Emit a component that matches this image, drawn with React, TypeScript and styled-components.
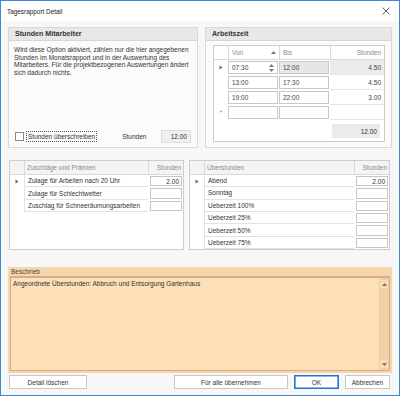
import React from "react";
import styled, { createGlobalStyle } from "styled-components";

const GlobalStyle = createGlobalStyle`
  html, body {
    margin: 0;
    padding: 0;
    background: #ffffff;
  }
  body {
    font-family: "Liberation Sans", Arial, sans-serif;
    font-size: 6.5px;
    color: #333333;
  }
  * {
    box-sizing: border-box;
  }
`;

// 창 전체
const Window = styled.div`
  width: 400px;
  height: 396px;
  border: 1px solid #3b87d8;
  background: #f7f7f7;
  display: flex;
  flex-direction: column;
`;

const TitleBar = styled.div`
  height: 20px;
  background: #ffffff;
  display: flex;
  align-items: center;
  justify-content: space-between;
  padding: 0 9px 0 6px;
  font-size: 6.4px;
  color: #222222;
`;

const Body = styled.div`
  flex: 1;
  display: flex;
  flex-direction: column;
  padding: 6px 7px 6px 7px;
`;

const TopRow = styled.div`
  display: flex;
  gap: 7px;
  height: 121px;
`;

const Group = styled.div<{ $width?: number }>`
  ${(p) => (p.$width ? `flex: 0 0 ${p.$width}px;` : "flex: 1;")}
  border: 1px solid #d9d9d9;
  background: #fbfbfb;
  display: flex;
  flex-direction: column;
`;

const GroupHeader = styled.div`
  height: 13px;
  background: #e8e8e8;
  border-bottom: 1px solid #d6d6d6;
  display: flex;
  align-items: center;
  padding-left: 6px;
  font-weight: bold;
  font-size: 7.1px;
  color: #333333;
`;

const GroupContent = styled.div<{ $pad: string }>`
  flex: 1;
  display: flex;
  flex-direction: column;
  padding: ${(p) => p.$pad};
`;

const Description = styled.div`
  line-height: 7.7px;
  color: #333333;
`;

const OverrideRow = styled.div`
  margin-top: auto;
  height: 13px;
  display: flex;
  align-items: center;
`;

const CheckBox = styled.span`
  width: 9px;
  height: 9px;
  border: 1px solid #8a8a8a;
  background: #ffffff;
  margin-left: 1px;
  flex-shrink: 0;
`;

const FocusLabel = styled.span`
  margin-left: 2px;
  border: 1px dotted #555555;
  padding: 1px 1px;
  line-height: 7px;
  white-space: nowrap;
`;

const FieldLabel = styled.span`
  margin-left: 25px;
`;

const ReadOnlyBox = styled.div<{ $width: number }>`
  width: ${(p) => p.$width}px;
  height: 13px;
  margin-left: auto;
  background: #efefef;
  border: 1px solid #dcdcdc;
  display: flex;
  align-items: center;
  justify-content: flex-end;
  padding-right: 3px;
`;

// 작업시간 그리드
const GridFrame = styled.div`
  flex: 1;
  border: 1px solid #cdcdcd;
  background: #ffffff;
  display: flex;
  flex-direction: column;
`;

const TimeHeader = styled.div`
  display: grid;
  grid-template-columns: 14px 51px 51px 1fr;
  height: 14px;
  border-bottom: 1px solid #d9d9d9;
`;

const HeaderCell = styled.div<{ $right?: boolean }>`
  display: flex;
  align-items: center;
  justify-content: ${(p) => (p.$right ? "flex-end" : "space-between")};
  padding: 0 3px;
  border-left: 1px solid #d9d9d9;
  color: #8a8a8a;
  &:first-child {
    border-left: none;
  }
`;

const TimeRow = styled.div`
  display: grid;
  grid-template-columns: 14px 51px 51px 1fr;
  height: 15px;
`;

const Indicator = styled.div`
  display: flex;
  align-items: center;
  justify-content: center;
`;

const NewRowMark = styled.span`
  color: #f08a24;
  font-size: 8px;
  line-height: 6px;
`;

const InputCell = styled.div<{ $selected?: boolean }>`
  margin: 1px 1px 1px 0;
  border: 1px solid #c8c8c8;
  background: ${(p) => (p.$selected ? "#e6e6e6" : "#ffffff")};
  display: flex;
  align-items: center;
  justify-content: space-between;
  padding: 0 3px;
  color: #444444;
`;

const HoursCell = styled.div<{ $selected?: boolean }>`
  display: flex;
  align-items: center;
  justify-content: flex-end;
  padding-right: 3px;
  background: ${(p) => (p.$selected ? "#ebebeb" : "transparent")};
  border-bottom: 1px solid #e6e6e6;
  color: #444444;
`;

const GridFooter = styled.div`
  margin-top: auto;
  display: flex;
  justify-content: flex-end;
  padding: 0 4px 3px 0;
`;

const TotalBox = styled.div`
  width: 48px;
  height: 14px;
  background: #ebebeb;
  display: flex;
  align-items: center;
  justify-content: flex-end;
  padding-right: 3px;
`;

// 할증 / 초과근무 그리드
const MiddleRow = styled.div`
  display: flex;
  gap: 5px;
  height: 90px;
  margin-top: 12px;
  padding: 0 2px 0 1px;
`;

const ListGrid = styled.div<{ $width?: number }>`
  ${(p) => (p.$width ? `flex: 0 0 ${p.$width}px;` : "flex: 1;")}
  border: 1px solid #cdcdcd;
  background: #ffffff;
  display: flex;
  flex-direction: column;
`;

const ListHeader = styled.div`
  display: grid;
  grid-template-columns: 14px 1fr 35px;
  height: 14px;
  background: #f4f4f4;
  border-bottom: 1px solid #d9d9d9;
  color: #8a8a8a;
`;

const ListHeaderCell = styled.div<{ $right?: boolean; $sep?: boolean }>`
  display: flex;
  align-items: center;
  justify-content: ${(p) => (p.$right ? "flex-end" : "flex-start")};
  padding: 0 2px;
  border-left: ${(p) => (p.$sep ? "1px solid #d9d9d9" : "none")};
`;

const ListRow = styled.div`
  display: grid;
  grid-template-columns: 14px 1fr 35px;
  height: 12.4px;
`;

const LabelCell = styled.div`
  display: flex;
  align-items: center;
  padding-left: 3px;
  border-left: 1px solid #e2e2e2;
  border-bottom: 1px solid #e2e2e2;
  color: #333333;
`;

const ValueCell = styled.div`
  margin: 1px 1px 1px 2px;
  border: 1px solid #c6c6c6;
  background: #ffffff;
  display: flex;
  align-items: center;
  justify-content: flex-end;
  padding-right: 2px;
`;

// 설명 영역
const NotePanel = styled.div`
  height: 106px;
  margin-top: 17px;
  background: #f8d6ab;
  display: flex;
  flex-direction: column;
  padding: 0 2px 2px 2px;
`;

const NoteLabel = styled.div`
  height: 9px;
  display: flex;
  align-items: center;
  padding-left: 1px;
  color: #444444;
`;

const NoteArea = styled.div`
  flex: 1;
  display: flex;
  background: #fddfb8;
  border: 1px solid #d4ae86;
  border-top-width: 2px;
`;

const NoteText = styled.div`
  flex: 1;
  padding: 2px 2px;
  color: #333333;
`;

const ScrollBar = styled.div`
  width: 10px;
  background: #f1d0a6;
  display: flex;
  flex-direction: column;
  justify-content: space-between;
  align-items: center;
  padding: 2px 0;
`;

const ScrollArrow = styled.div`
  width: 8px;
  height: 8px;
  background: #f8dcb6;
  display: flex;
  align-items: center;
  justify-content: center;
`;

// 버튼 영역
const ButtonRow = styled.div`
  display: flex;
  height: 14px;
  margin-top: 2px;
  padding: 0 2px 0 1px;
  gap: 6px;
`;

const Button = styled.div<{ $width: number; $primary?: boolean }>`
  width: ${(p) => p.$width}px;
  border: 1px solid ${(p) => (p.$primary ? "#2b72c8" : "#c8c8c8")};
  box-shadow: ${(p) => (p.$primary ? "inset 0 0 0 0.6px #2b72c8" : "none")};
  background: #ffffff;
  display: flex;
  align-items: center;
  justify-content: center;
  color: #333333;
`;

const Spacer = styled.div`
  flex: 1;
`;

const RowArrow = () => (
  <svg width="4" height="5" viewBox="0 0 4 5">
    <path d="M0.5 0.5 L3.5 2.5 L0.5 4.5 Z" fill="#666" />
  </svg>
);

const TinyTriangle = ({ down }: { down?: boolean }) => (
  <svg width="5" height="3" viewBox="0 0 5 3">
    <path d={down ? "M0 0 L5 0 L2.5 3 Z" : "M0 3 L5 3 L2.5 0 Z"} fill="#777" />
  </svg>
);

const Spinner = styled.span`
  display: flex;
  flex-direction: column;
  gap: 2px;
`;

const timeRows = [
  { von: "07:30", bis: "12:00", std: "4.50", selected: true },
  { von: "13:00", bis: "17:30", std: "4.50" },
  { von: "19:00", bis: "22:00", std: "3.00" },
];

const zuschlaege = [
  { label: "Zulage für Arbeiten nach 20 Uhr", value: "2.00" },
  { label: "Zulage für Schlechtwetter", value: "" },
  { label: "Zuschlag für Schneeräumungsarbeiten", value: "" },
];

const ueberstunden = [
  { label: "Abend", value: "2.00" },
  { label: "Sonntag", value: "" },
  { label: "Ueberzeit 100%", value: "" },
  { label: "Ueberzeit 25%", value: "" },
  { label: "Ueberzeit 50%", value: "" },
  { label: "Ueberzeit 75%", value: "" },
];

function App() {
  return (
    <Window>
      <GlobalStyle />
      <TitleBar>
        <span>Tagesrapport Detail</span>
        <svg width="8" height="8" viewBox="0 0 8 8">
          <path d="M0.5 0.5 L7.5 7.5 M7.5 0.5 L0.5 7.5" stroke="#333" strokeWidth="0.8" />
        </svg>
      </TitleBar>
      <Body>
        <TopRow>
          <Group $width={190}>
            <GroupHeader>Stunden Mitarbeiter</GroupHeader>
            <GroupContent $pad="5px 6px 4px 5px">
              <Description>
                Wird diese Option aktiviert, zählen nur die hier angegebenen
                Stunden im Monatsrapport und in der Auswertung des
                Mitarbeiters. Für die projektbezogenen Auswertungen ändert
                sich dadurch nichts.
              </Description>
              <OverrideRow>
                <CheckBox />
                <FocusLabel>Stunden überschreiben</FocusLabel>
                <FieldLabel>Stunden</FieldLabel>
                <ReadOnlyBox $width={30}>12.00</ReadOnlyBox>
              </OverrideRow>
            </GroupContent>
          </Group>
          <Group>
            <GroupHeader>Arbeitszeit</GroupHeader>
            <GroupContent $pad="4px 6px 5px 7px">
              <GridFrame>
                <TimeHeader>
                  <HeaderCell />
                  <HeaderCell>
                    Von
                    <TinyTriangle />
                  </HeaderCell>
                  <HeaderCell>Bis</HeaderCell>
                  <HeaderCell $right>Stunden</HeaderCell>
                </TimeHeader>
                {timeRows.map((r, i) => (
                  <TimeRow key={r.von}>
                    <Indicator>{i === 0 && <RowArrow />}</Indicator>
                    <InputCell>
                      {r.von}
                      {i === 0 && (
                        <Spinner>
                          <TinyTriangle />
                          <TinyTriangle down />
                        </Spinner>
                      )}
                    </InputCell>
                    <InputCell $selected={r.selected}>{r.bis}</InputCell>
                    <HoursCell $selected={r.selected}>{r.std}</HoursCell>
                  </TimeRow>
                ))}
                <TimeRow>
                  <Indicator>
                    <NewRowMark>*</NewRowMark>
                  </Indicator>
                  <InputCell />
                  <InputCell />
                  <HoursCell />
                </TimeRow>
                <GridFooter>
                  <TotalBox>12.00</TotalBox>
                </GridFooter>
              </GridFrame>
            </GroupContent>
          </Group>
        </TopRow>

        <MiddleRow>
          <ListGrid $width={175}>
            <ListHeader>
              <ListHeaderCell />
              <ListHeaderCell $sep>Zuschläge und Prämien</ListHeaderCell>
              <ListHeaderCell $right $sep>
                Stunden
              </ListHeaderCell>
            </ListHeader>
            {zuschlaege.map((r, i) => (
              <ListRow key={r.label}>
                <Indicator>{i === 0 && <RowArrow />}</Indicator>
                <LabelCell>{r.label}</LabelCell>
                <ValueCell>{r.value}</ValueCell>
              </ListRow>
            ))}
          </ListGrid>
          <ListGrid>
            <ListHeader>
              <ListHeaderCell />
              <ListHeaderCell $sep>Überstunden</ListHeaderCell>
              <ListHeaderCell $right $sep>
                Stunden
              </ListHeaderCell>
            </ListHeader>
            {ueberstunden.map((r, i) => (
              <ListRow key={r.label}>
                <Indicator>{i === 0 && <RowArrow />}</Indicator>
                <LabelCell>{r.label}</LabelCell>
                <ValueCell>{r.value}</ValueCell>
              </ListRow>
            ))}
          </ListGrid>
        </MiddleRow>

        <NotePanel>
          <NoteLabel>Beschrieb</NoteLabel>
          <NoteArea>
            <NoteText>
              Angeordnete Überstunden: Abbruch und Entsorgung Gartenhaus
            </NoteText>
            <ScrollBar>
              <ScrollArrow>
                <TinyTriangle />
              </ScrollArrow>
              <ScrollArrow>
                <TinyTriangle down />
              </ScrollArrow>
            </ScrollBar>
          </NoteArea>
        </NotePanel>

        <ButtonRow>
          <Button $width={78}>Detail löschen</Button>
          <Spacer />
          <Button $width={114}>Für alle übernehmen</Button>
          <Button $width={45} $primary>
            OK
          </Button>
          <Button $width={45}>Abbrechen</Button>
        </ButtonRow>
      </Body>
    </Window>
  );
}

export default App;
